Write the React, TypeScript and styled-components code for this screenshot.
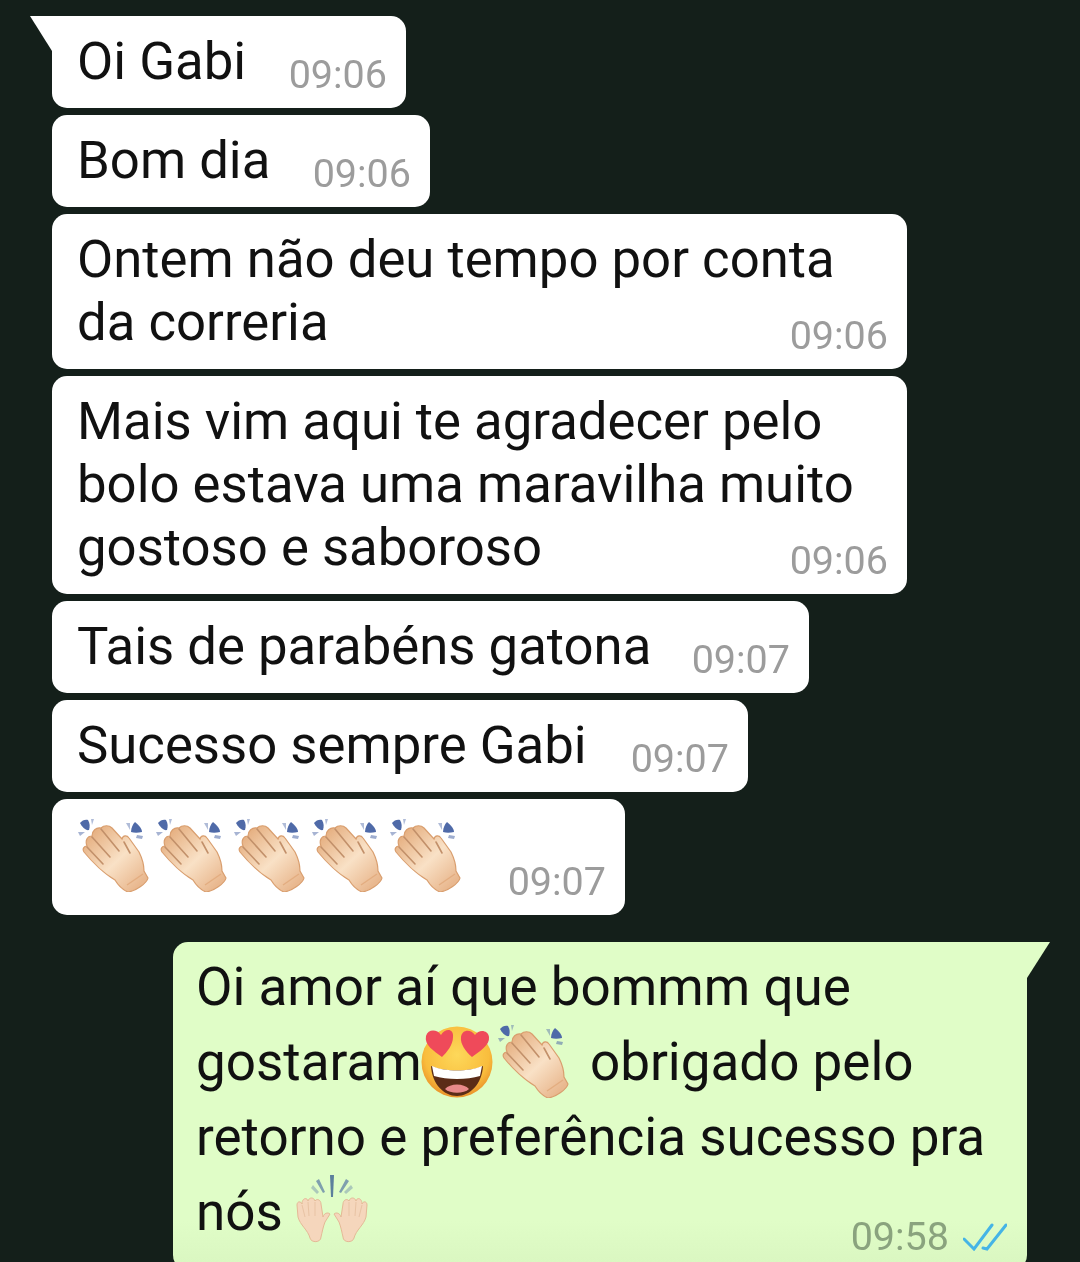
import React from 'react';
import styled, { createGlobalStyle } from 'styled-components';

const GlobalStyle = createGlobalStyle`
  html, body {
    margin: 0;
    padding: 0;
    background: #141f1a;
  }
`;

const Chat = styled.div`
  display: flex;
  flex-direction: column;
  align-items: flex-start;
  gap: 7px;
  box-sizing: border-box;
  width: 1080px;
  height: 1262px;
  overflow: hidden;
  padding: 16px 0 0 52px;
  background: #141f1a;
  font-family: Roboto, "Liberation Sans", sans-serif;
  filter: blur(0.5px);
`;

/* message and time share one grid cell, so the time can sit beside a short last line */
const Bubble = styled.div<{ $width: number }>`
  position: relative;
  display: grid;
  flex-shrink: 0;
  box-sizing: border-box;
  width: ${(p) => p.$width}px;
  padding: 14px 19px 15px 25px;
  border-radius: 15px;
  background: #ffffff;

  & > * {
    grid-area: 1 / 1;
  }
`;

const FirstBubble = styled(Bubble)`
  border-top-left-radius: 0;

  &::before {
    content: '';
    position: absolute;
    top: 0;
    left: -22px;
    width: 22px;
    height: 35px;
    background: #ffffff;
    clip-path: polygon(0 0, 100% 0, 100% 100%);
  }
`;

const OutBubble = styled(Bubble)`
  margin: 20px 0 0 121px;
  padding: 8px 20px 20px 23px;
  background: linear-gradient(#e0fdc7 85%, #d9f6c0 100%);
  border-top-right-radius: 0;

  &::after {
    content: '';
    position: absolute;
    top: 0;
    right: -23px;
    width: 23px;
    height: 36px;
    background: #e0fdc7;
    clip-path: polygon(0 0, 100% 0, 0 100%);
  }
`;

const Message = styled.div`
  font-size: 52.7px;
  line-height: 63px;
  color: #111111;
  white-space: nowrap;
`;

const OutMessage = styled(Message)`
  font-size: 53px;
  line-height: 75px;
`;

const Time = styled.span`
  justify-self: end;
  align-self: end;
  margin-bottom: -4px;
  font-size: 39.5px;
  line-height: 44px;
  color: #9c9c9c;
  white-space: nowrap;
`;

const OutMeta = styled.div`
  justify-self: end;
  align-self: end;
  display: flex;
  align-items: center;
  gap: 14px;
  margin-bottom: -9px;
`;

const OutTime = styled(Time)`
  margin: 0;
  color: #8aa37e;
`;

const EmojiRow = styled.div`
  display: flex;
  gap: 6px;
  margin-top: 5px;
  height: 82px;
`;

const RowEmoji = styled.svg`
  display: block;
`;

/* negative margins keep the emoji from growing the line box */
const InlineEmoji = styled.svg<{ $drop: number; $before?: number; $after?: number }>`
  display: inline-block;
  vertical-align: ${(p) => -p.$drop}px;
  margin: -20px ${(p) => p.$after ?? 0}px -10px ${(p) => p.$before ?? 0}px;
`;

const ClapShape: React.FC<{ id: string }> = ({ id }) => (
  <>
    <defs>
      <linearGradient id={id} x1="0.1" y1="0.1" x2="0.85" y2="0.9">
        <stop offset="0" stopColor="#e5ae7f" />
        <stop offset="0.55" stopColor="#f9e1c6" />
        <stop offset="1" stopColor="#e9b88f" />
      </linearGradient>
    </defs>
    <g fill="#4f6aa8">
      <path d="M3 5 C5 2 9 1 11 2 C13 5 13 9 12 12 C9 13 5 9 3 5 Z" />
      <path d="M1 14 L8 14 L3 18 Z" opacity="0.5" />
      <path d="M14 1 L17 1 L15 7 Z" opacity="0.45" />
      <path d="M58 4 C62 7 65 11 65 14 C61 15 57 15 54 14 C54 10 56 6 58 4 Z" />
      <path d="M49 5 L53 5 L53 12 Z" opacity="0.45" />
      <path d="M60 17 L66 18 L65 21 L59 20 Z" opacity="0.55" />
    </g>
    <path
      d="M7 34 C5 31 7 28 10 28 C8 23 10 18 15 18 C15 13 19 9 24 10 C27 7 32 7 35 10 L45 21 C46 17 50 17 52 20 L62 34 C66 42 67 49 67 53 L71 60 C70 65 59 73 51 74 C46 72 41 67 38 62 C28 56 15 44 7 34 Z"
      fill={`url(#${id})`}
      stroke="#d99e6e"
      strokeWidth="1.2"
    />
    <g fill="none" stroke="#c2906a" strokeWidth="1.6" strokeLinecap="round">
      <path d="M15 19 L33 39" />
      <path d="M24 11 L42 33" />
      <path d="M10 29 L26 46" />
      <path d="M47 24 L53 35" />
    </g>
    <path d="M50 67 L66 56" stroke="#e3ad80" strokeWidth="1.4" fill="none" />
  </>
);

const HeartEyes: React.FC = () => (
  <InlineEmoji $drop={8} $before={-1} width={72} height={72} viewBox="0 0 72 72">
    <defs>
      <radialGradient id="faceFill" cx="0.5" cy="0.4" r="0.6">
        <stop offset="0" stopColor="#fdd85a" />
        <stop offset="0.75" stopColor="#f9bd3d" />
        <stop offset="1" stopColor="#ea922a" />
      </radialGradient>
    </defs>
    <circle cx="36" cy="36" r="35.5" fill="url(#faceFill)" />
    <path d="M10 40 C22 46 50 46 62 40 C61 58 49 70 36 70 C23 70 11 58 10 40 Z" fill="#5b2c17" />
    <path d="M11 40 C24 46 48 46 61 40 L59 50 C46 54 26 54 13 50 Z" fill="#ffffff" />
    <path d="M24 63 C29 57 43 57 48 63 C43 68 29 68 24 63 Z" fill="#e98a8a" />
    <path d="M21 31 C13 25 3 19 5 10 C7 3 16 3 20 9 C24 2 33 2 32 11 C32 19 26 26 21 31 Z" fill="#ef4a5a" />
    <path d="M51 31 C45 26 39 18 40 11 C41 3 50 3 54 9 C58 3 67 4 68 11 C69 19 59 25 51 31 Z" fill="#ef4a5a" />
  </InlineEmoji>
);

const RaisedHands: React.FC = () => (
  <InlineEmoji $drop={3} width={72} height={68} viewBox="0 0 72 68">
    <g fill="#7f9fae">
      <path d="M34 0 L38 0 L37 22 L35 22 Z" fill="#5c7f9c" />
      <path d="M20 6 L23 4 L29 17 L27 18 Z" />
      <path d="M50 4 L53 6 L45 18 L43 17 Z" />
      <path d="M15 13 L17 10 L23 17 L21 19 Z" opacity="0.55" />
      <path d="M55 10 L57 13 L50 19 L48 17 Z" opacity="0.55" />
    </g>
    <g fill="#f5d6bc" stroke="#e4b996" strokeWidth="1">
      <path d="M1 30 C1 26 5 26 6 29 C6 23 11 22 12 26 C13 22 18 22 19 26 C21 23 25 25 25 29 L27 42 C28 38 32 37 34 39 L29 47 C27 52 26 58 25 62 C25 68 15 68 14 63 C12 55 4 50 2 42 Z" />
      <path d="M71 30 C71 26 67 26 66 29 C66 23 61 22 60 26 C59 22 54 22 53 26 C51 23 47 25 47 29 L45 42 C44 38 40 37 38 39 L43 47 C45 52 46 58 47 62 C47 68 57 68 58 63 C60 55 68 50 70 42 Z" />
    </g>
    <g fill="none" stroke="#e8c3a4" strokeWidth="1">
      <path d="M6 30 L9 42" />
      <path d="M12 27 L13 41" />
      <path d="M19 27 L19 41" />
      <path d="M66 30 L63 42" />
      <path d="M60 27 L59 41" />
      <path d="M53 27 L53 41" />
    </g>
  </InlineEmoji>
);

const ReadTicks: React.FC = () => (
  <svg width="44" height="28" viewBox="0 0 44 28" fill="none" stroke="#45b4e6" strokeWidth="3" strokeLinecap="round">
    <path d="M1 16 L11 26 L29 2" />
    <path d="M20 25 L24 26 L43 2" />
  </svg>
);

const simple = [
  { text: 'Bom dia', time: '09:06', width: 378 },
  { text: <>Ontem não deu tempo por conta<br />da correria</>, time: '09:06', width: 855 },
  { text: <>Mais vim aqui te agradecer pelo<br />bolo estava uma maravilha muito<br />gostoso e saboroso</>, time: '09:06', width: 855 },
  { text: 'Tais de parabéns gatona', time: '09:07', width: 757 },
  { text: 'Sucesso sempre Gabi', time: '09:07', width: 696 },
];

const App: React.FC = () => (
  <Chat>
    <GlobalStyle />
    <FirstBubble $width={354}>
      <Message>Oi Gabi</Message>
      <Time>09:06</Time>
    </FirstBubble>
    {simple.map((m, i) => (
      <Bubble key={i} $width={m.width}>
        <Message>{m.text}</Message>
        <Time>{m.time}</Time>
      </Bubble>
    ))}
    <Bubble $width={573}>
      <EmojiRow>
        {[0, 1, 2, 3, 4].map((n) => (
          <RowEmoji key={n} width={72} height={74} viewBox="0 0 72 74">
            <ClapShape id={`clapRow${n}`} />
          </RowEmoji>
        ))}
      </EmojiRow>
      <Time>09:07</Time>
    </Bubble>
    <OutBubble $width={854}>
      <OutMessage>
        Oi amor aí que bommm que<br />
        gostaram<HeartEyes />
        <InlineEmoji $drop={8} $before={4} $after={8} width={72} height={74} viewBox="0 0 72 74">
          <ClapShape id="clapOut" />
        </InlineEmoji>{' '}
        obrigado pelo<br />
        retorno e preferência sucesso pra<br />
        nós <RaisedHands />
      </OutMessage>
      <OutMeta>
        <OutTime>09:58</OutTime>
        <ReadTicks />
      </OutMeta>
    </OutBubble>
  </Chat>
);

export default App;
